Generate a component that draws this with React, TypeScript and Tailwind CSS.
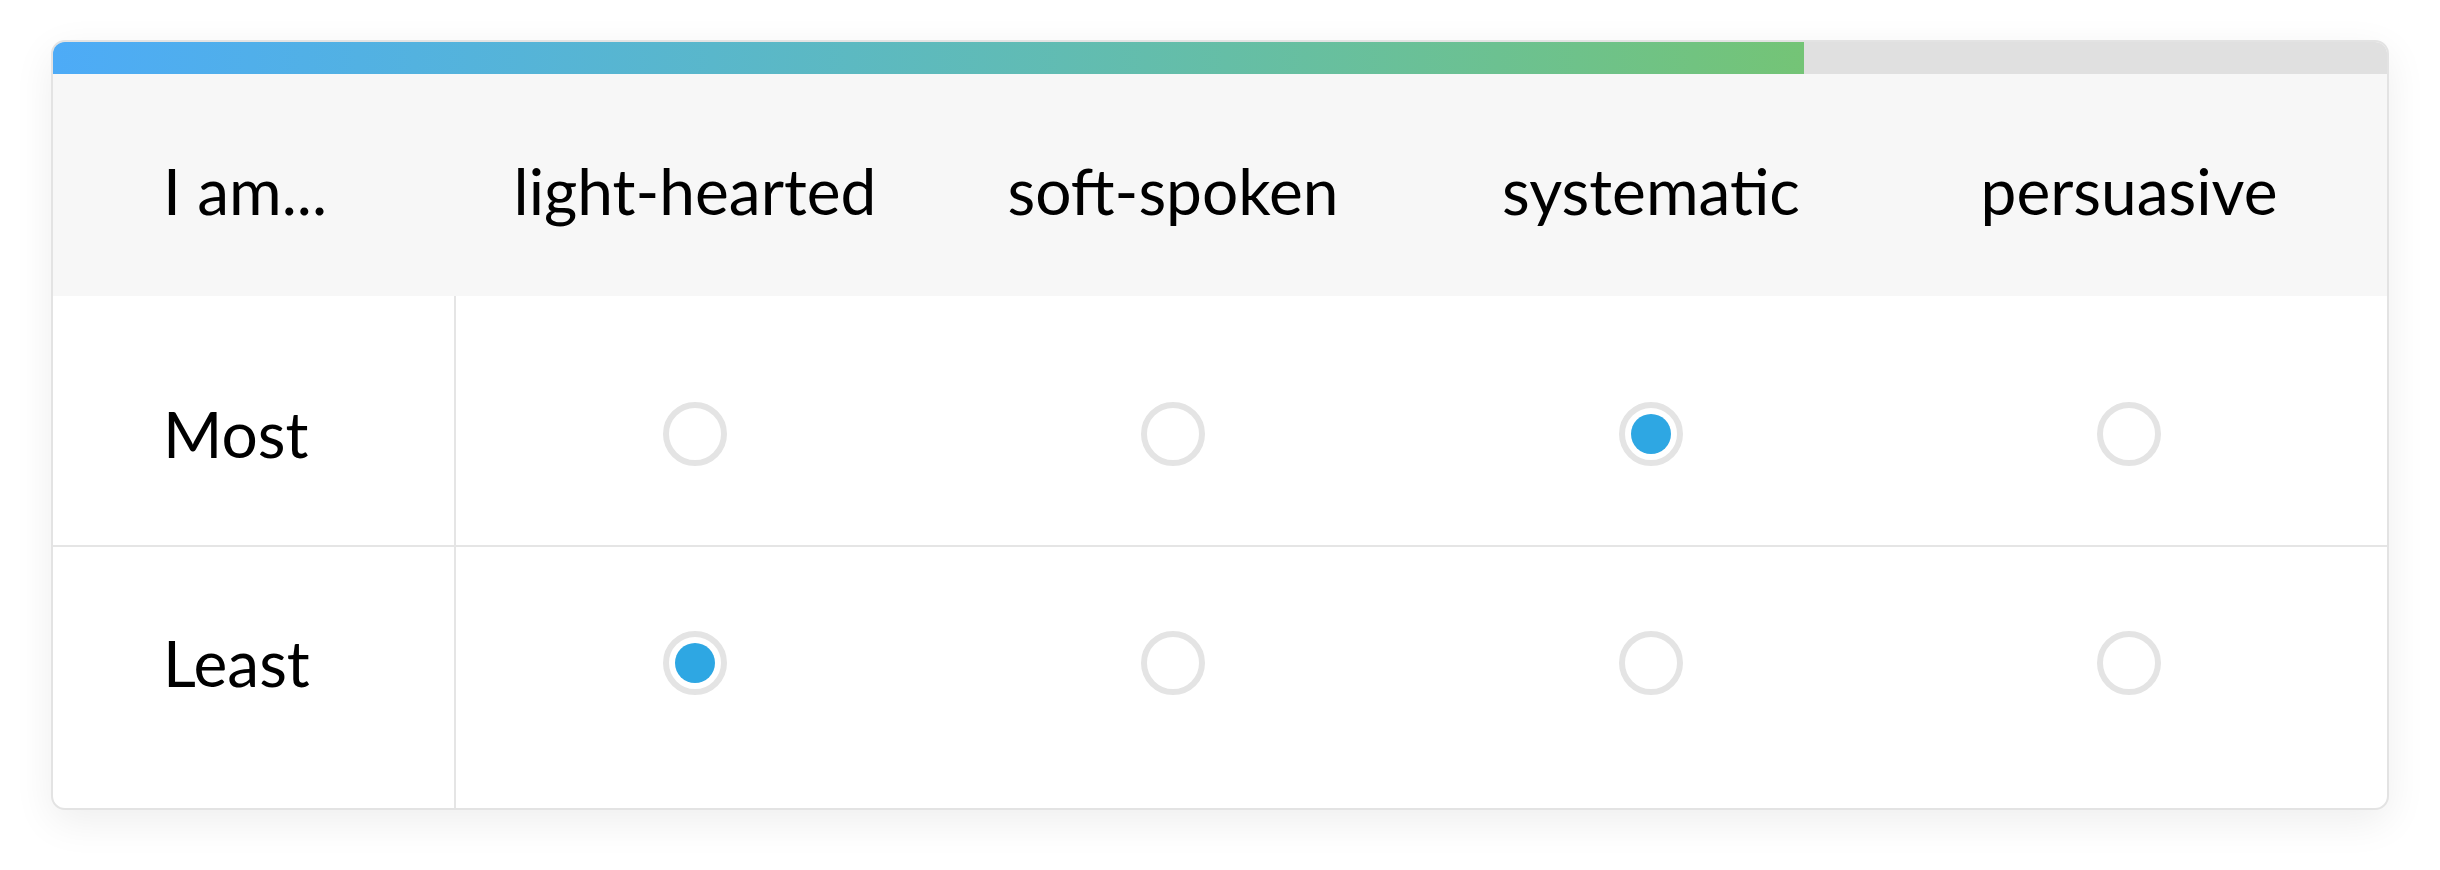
import React from 'react';

const options = ['light-hearted', 'soft-spoken', 'systematic', 'persuasive'];

const rows = [
  { label: 'Most', selected: 2, cls: 'h-[249px]', pad: 'pt-[106px]' },
  { label: 'Least', selected: 0, cls: 'h-[263px] border-t-2 border-[#e5e5e5]', pad: 'pt-[84px]' },
];

const Radio = ({ checked }: { checked: boolean }) => (
  <span className="flex h-16 w-16 items-center justify-center rounded-full border-[6px] border-[#e4e4e4] bg-white">
    {checked && <span className="h-10 w-10 rounded-full bg-[#2ea7e3]" />}
  </span>
);

export default function App() {
  return (
    <div className="min-h-screen bg-white px-[51px] pt-[40px] font-['Lato',_'Noto_Sans',_sans-serif] text-black">
      <div className="overflow-hidden rounded-[14px] border-2 border-[#e3e3e3] bg-white shadow-[0_12px_40px_rgba(0,0,0,0.07)]">
        {/* progress */}
        <div className="flex h-[32px] bg-[#e0e0e0]">
          <div className="w-[75%] bg-linear-to-r from-[#4dabf7] to-[#74c476]" />
        </div>

        {/* header */}
        <div className="grid h-[222px] grid-cols-[403px_repeat(4,478px)] items-center bg-[#f7f7f7] pt-[12px] text-[64px] leading-none">
          <div className="pl-[110px]">I am...</div>
          {options.map((o) => (
            <div key={o} className="text-center">
              {o}
            </div>
          ))}
        </div>

        {/* answer rows */}
        {rows.map((r) => (
          <div key={r.label} className={`grid grid-cols-[403px_repeat(4,478px)] ${r.cls}`}>
            <div className={`border-r-2 border-[#e5e5e5] pl-[110px] ${r.pad}`}>
              <div className="flex h-16 items-center text-[64px] leading-none">{r.label}</div>
            </div>
            {options.map((o, i) => (
              <div key={o} className={`flex justify-center ${r.pad}`}>
                <Radio checked={i === r.selected} />
              </div>
            ))}
          </div>
        ))}
      </div>
    </div>
  );
}
